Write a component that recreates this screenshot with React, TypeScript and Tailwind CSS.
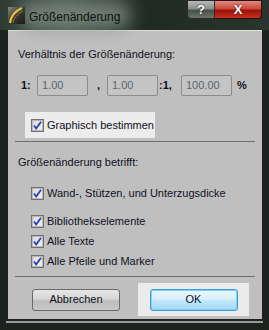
import React from "react";

const Check = () => (
  <svg width="13" height="13" viewBox="0 0 13 13" className="shrink-0">
    <defs>
      <linearGradient id="cbg" x1="0" y1="0" x2="1" y2="1">
        <stop offset="0" stopColor="#d8d8d8" />
        <stop offset="1" stopColor="#f4f4f4" />
      </linearGradient>
    </defs>
    <rect x="0.5" y="0.5" width="12" height="12" fill="url(#cbg)" stroke="#707070" />
    <rect x="1.5" y="1.5" width="10" height="10" fill="none" stroke="#b8b8b8" />
    <path d="M3 6.5 L5.2 9.5 L10 2.8" fill="none" stroke="#2b3fae" strokeWidth="1.8" />
  </svg>
);

const Field = ({ v }: { v: string }) => (
  <div className="w-[51px] h-[21px] rounded-[2px] border border-[#8c8c8c] bg-[#c4c4c4] flex items-center pl-[4px] text-[#5d6470]">
    {v}
  </div>
);

export default function App() {
  const font = { fontFamily: '"Liberation Sans", Arial, sans-serif' };
  return (
    <div
      className="w-[269px] h-[330px] relative overflow-hidden bg-[#1c231f] flex flex-col text-[11px] text-[#111122] whitespace-nowrap"
      style={font}
    >
      {/* Title bar */}
      <div className="h-[30px] flex items-start relative bg-[linear-gradient(90deg,#2e3a33_0%,#4a5a50_25%,#1e2a22_55%,#2a352e_100%)]">
        <div className="absolute left-[20px] top-[2px] w-[110px] h-[26px] rounded-full bg-[#7f8c84] blur-[8px] opacity-80" />
        <svg width="17" height="17" viewBox="0 0 17 17" className="absolute left-[8px] top-[7px]">
          <defs>
            <linearGradient id="ti" x1="0" y1="0" x2="1" y2="1">
              <stop offset="0" stopColor="#8a8a80" />
              <stop offset="0.5" stopColor="#3a3a34" />
              <stop offset="1" stopColor="#1a1a16" />
            </linearGradient>
          </defs>
          <rect x="0" y="0" width="17" height="17" fill="url(#ti)" />
          <path d="M2 16 C3 9 7 4 14 1" fill="none" stroke="#e8c040" strokeWidth="2.2" />
          <path d="M5 16 C6 11 9 7 15 4" fill="none" stroke="#9a7a20" strokeWidth="1" />
        </svg>
        <div className="absolute left-[29px] top-[8px] text-[12px] text-[#0c1410]">Größenänderung</div>
        <div className="absolute left-[187px] top-0 flex">
          <div className="w-[28px] h-[19px] rounded-bl-[4px] border border-[#2a2a2a] bg-[linear-gradient(180deg,#b4bab6_0%,#8c938f_45%,#47504a_55%,#6a736d_100%)] flex items-center justify-center text-white font-bold text-[13px]" style={{ textShadow: "0 0 2px #000" }}>?</div>
          <div className="w-[47px] h-[19px] rounded-br-[4px] border border-l-0 border-[#2a1010] bg-[linear-gradient(180deg,#e08a80_0%,#c84a3e_45%,#9c1208_55%,#c83020_100%)] flex items-center justify-center text-white font-bold text-[13px]" style={{ textShadow: "0 0 2px #300" }}>X</div>
        </div>
      </div>

      {/* Client */}
      <div className="ml-[8px] mr-[7px] h-[289px] bg-[#bfbfbf] border-t border-[#e0e0e0] flex flex-col">
        <div className="mt-[16px] ml-[10px] h-[14px] leading-[14px]">Verhältnis der Größenänderung:</div>

        <div className="mt-[14px] flex items-center h-[21px]">
          <span className="ml-[13px] w-[16px] font-bold">1:</span>
          <Field v="1.00" />
          <span className="ml-[9px] w-[10px] font-bold">,</span>
          <Field v="1.00" />
          <span className="ml-[1px] w-[22px] font-bold">:1,</span>
          <Field v="100.00" />
          <span className="ml-[5px] font-bold">%</span>
        </div>

        <div className="mt-[16px] ml-[17px] w-[130px] h-[26px] bg-[#ececec] flex items-center pl-[6px] gap-[3px]">
          <Check />
          <span className="text-[11px]">Graphisch bestimmen</span>
        </div>

        <div className="mt-[3px] mx-[7px] h-px bg-[#6e6e6e]" />

        <div className="mt-[13px] ml-[10px] h-[14px] leading-[14px]">Größenänderung betrifft:</div>

        <div className="mt-[17px] ml-[23px] flex items-center gap-[3px] h-[14px]">
          <Check />
          <span>Wand-, Stützen, und Unterzugsdicke</span>
        </div>
        <div className="mt-[14px] ml-[23px] flex items-center gap-[3px] h-[14px]">
          <Check />
          <span>Bibliothekselemente</span>
        </div>
        <div className="mt-[6px] ml-[23px] flex items-center gap-[3px] h-[14px]">
          <Check />
          <span>Alle Texte</span>
        </div>
        <div className="mt-[6px] ml-[23px] flex items-center gap-[3px] h-[14px]">
          <Check />
          <span>Alle Pfeile und Marker</span>
        </div>

        <div className="mt-[8px] mx-[7px] h-px bg-[#6e6e6e]" />

        <div className="mt-[6px] flex items-center">
          <div className="ml-[24px] w-[88px] h-[22px] rounded-[3px] border border-[#6a6a6a] bg-[linear-gradient(180deg,#e6e6e6_0%,#d6d6d6_45%,#bcbcbc_55%,#c8c8c8_100%)] flex items-center justify-center">
            Abbrechen
          </div>
          <div className="ml-[18px] w-[111px] h-[33px] bg-[#ebebeb] flex items-center justify-center">
            <div className="w-[88px] h-[22px] rounded-[3px] border border-[#3c9fd6] bg-[linear-gradient(180deg,#eaf6fd_0%,#d9f0fc_45%,#bee6fd_55%,#a7d9f5_100%)] flex items-center justify-center shadow-[inset_0_0_0_1px_#7fd0f5]">
              OK
            </div>
          </div>
        </div>
      </div>
      <div className="mx-[6px] mt-[2px] h-[2px] bg-[#9a9a9a]" />
    </div>
  );
}
